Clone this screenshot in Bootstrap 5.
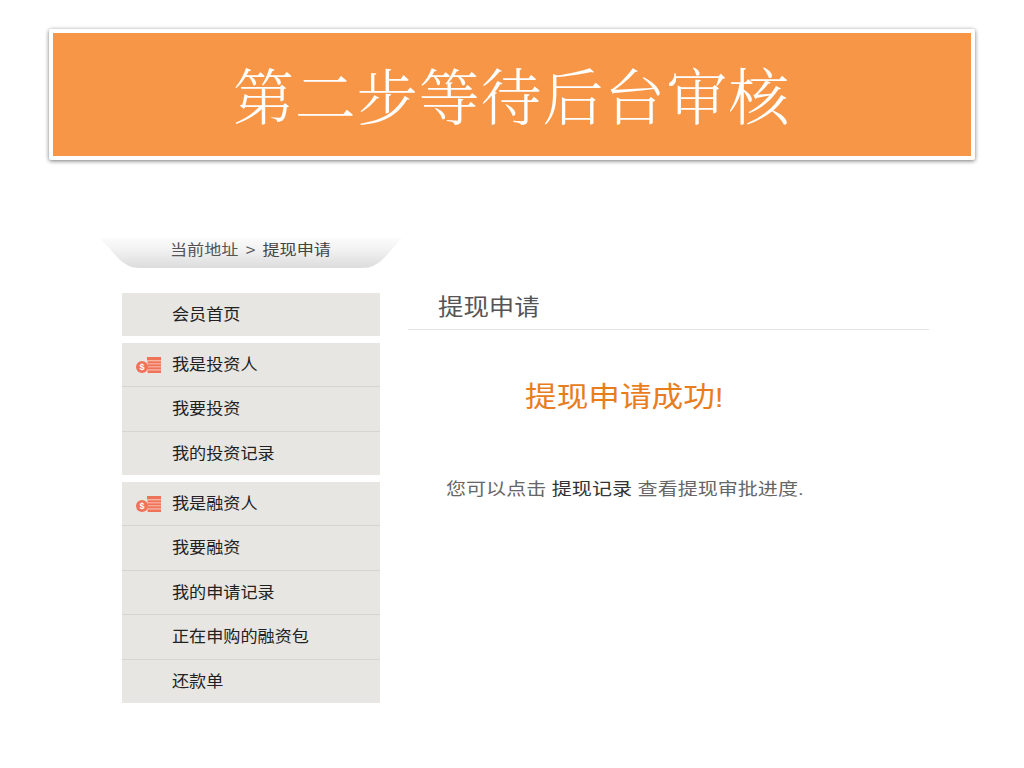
<!DOCTYPE html>
<html lang="zh-CN">
<head>
<meta charset="utf-8">
<title>第二步等待后台审核</title>
<link rel="stylesheet" href="https://cdn.jsdelivr.net/npm/bootstrap@5.3.0/dist/css/bootstrap.min.css">
<style>
body{background:#fff;font-family:"Liberation Sans","Noto Sans CJK SC",sans-serif;color:#333;height:768px;overflow:hidden}
.page-wrap{padding:29px 49px 0 49px}
.banner-box{height:131px;background:#f79646;border:4px solid #fff;box-shadow:0 1px 4px rgba(0,0,0,.55);border-radius:2px;display:flex;align-items:center;justify-content:center}
.banner-text{color:#fff;font-family:"Noto Serif CJK SC","Liberation Serif","Noto Sans CJK SC",serif;font-weight:300;font-size:61px;line-height:1;letter-spacing:.9px;margin:0 0 3px -1px}
.crumb-bar{margin:78px 0 0 51px;width:302px;height:30px;background:linear-gradient(#fbfbfb,#f3f3f3 35%,#dcdcdc);clip-path:path('M0 0H302L284 20Q275 30 262 30H40Q27 30 18 20Z');font-size:15px;color:#555;padding-left:70px;line-height:24px}
.stretch-txt{display:inline-block;transform-origin:left center;white-space:nowrap}
.crumb-bar .stretch-txt{transform:scaleX(1.14);word-spacing:2px}
.crumb-now{color:#444}
.main-area{margin:25px 0 0 73px}
.side-col{width:258px;flex:none;display:flex;flex-direction:column;gap:6.5px}
.side-group{background:#e7e6e3}
.side-row{height:44.5px;display:flex;align-items:center;padding-left:50px;position:relative;font-size:16px;color:#222;border-bottom:1px solid #d6d5d2}
.side-row:last-child{border-bottom:0;height:43.5px}
.side-row.single{height:43px}
.side-row .stretch-txt{transform:scaleX(1.07);position:relative;top:.5px}
.coin-ic{position:absolute;left:14px;top:14px;width:25px;height:16px}
.content-col{width:521px;margin-left:28px}
.content-title{font-size:22.5px;font-weight:400;color:#555;line-height:28px;padding:0 0 8px 30px;margin:0;border-bottom:1px solid #e3e3e3}
.content-title .stretch-txt{transform:scaleX(1.13);position:relative;top:1px}
.success-line{font-size:28px;color:#e87d1e;line-height:32px;margin:52px 0 0 117px}
.success-line .stretch-txt{transform:scaleX(1.13)}
.tip-line{font-size:16.5px;color:#666;line-height:22px;margin:64px 0 0 38px}
.tip-line .stretch-txt{transform:scaleX(1.215)}
.tip-link{color:#333;text-decoration:none}
</style>
</head>
<body>
<div class="page-wrap">
  <div class="banner-box"><h1 class="banner-text">第二步等待后台审核</h1></div>
  <div class="crumb-bar"><span class="stretch-txt">当前地址 &gt; <span class="crumb-now">提现申请</span></span></div>
  <div class="main-area d-flex align-items-start">
    <nav class="side-col">
      <div class="side-group"><div class="side-row single"><span class="stretch-txt">会员首页</span></div></div>
      <div class="side-group">
        <div class="side-row"><svg class="coin-ic" viewBox="0 0 25 16"><rect x="11" y="0" width="14" height="16" fill="#f8b3a3"/><g fill="#ee7359"><rect x="11" y="0" width="14" height="3"/><rect x="12" y="4.4" width="13" height="1.8"/><rect x="12" y="7.4" width="13" height="1.8"/><rect x="12" y="10.4" width="13" height="1.8"/><rect x="12" y="13.6" width="13" height="2.4"/><circle cx="6" cy="10" r="6"/></g><text x="6" y="13" font-size="9" font-weight="700" fill="#fff" text-anchor="middle" font-family="Liberation Sans">$</text></svg><span class="stretch-txt">我是投资人</span></div>
        <div class="side-row"><span class="stretch-txt">我要投资</span></div>
        <div class="side-row"><span class="stretch-txt">我的投资记录</span></div>
      </div>
      <div class="side-group">
        <div class="side-row"><svg class="coin-ic" viewBox="0 0 25 16"><rect x="11" y="0" width="14" height="16" fill="#f8b3a3"/><g fill="#ee7359"><rect x="11" y="0" width="14" height="3"/><rect x="12" y="4.4" width="13" height="1.8"/><rect x="12" y="7.4" width="13" height="1.8"/><rect x="12" y="10.4" width="13" height="1.8"/><rect x="12" y="13.6" width="13" height="2.4"/><circle cx="6" cy="10" r="6"/></g><text x="6" y="13" font-size="9" font-weight="700" fill="#fff" text-anchor="middle" font-family="Liberation Sans">$</text></svg><span class="stretch-txt">我是融资人</span></div>
        <div class="side-row"><span class="stretch-txt">我要融资</span></div>
        <div class="side-row"><span class="stretch-txt">我的申请记录</span></div>
        <div class="side-row"><span class="stretch-txt">正在申购的融资包</span></div>
        <div class="side-row"><span class="stretch-txt">还款单</span></div>
      </div>
    </nav>
    <section class="content-col">
      <h2 class="content-title"><span class="stretch-txt">提现申请</span></h2>
      <p class="success-line"><span class="stretch-txt">提现申请成功!</span></p>
      <p class="tip-line"><span class="stretch-txt">您可以点击 <a class="tip-link" href="#">提现记录</a> 查看提现审批进度.</span></p>
    </section>
  </div>
</div>
<script src="https://cdn.jsdelivr.net/npm/bootstrap@5.3.0/dist/js/bootstrap.bundle.min.js"></script>
</body>
</html>
